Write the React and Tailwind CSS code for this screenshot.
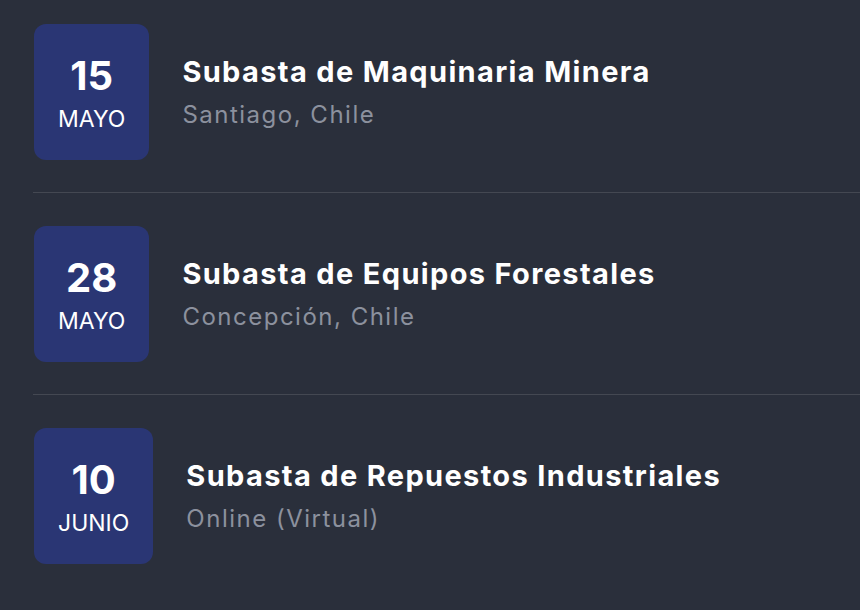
import React from "react";

const items = [
  { day: "15", month: "MAYO", title: "Subasta de Maquinaria Minera", place: "Santiago, Chile" },
  { day: "28", month: "MAYO", title: "Subasta de Equipos Forestales", place: "Concepción, Chile" },
  { day: "10", month: "JUNIO", title: "Subasta de Repuestos Industriales", place: "Online (Virtual)" },
];

export default function App() {
  return (
    <div
      className="w-[860px] h-[610px] overflow-hidden bg-[#2a2f3b] pl-[34px]"
      style={{ fontFamily: "Inter, 'Noto Sans', sans-serif" }}
    >
      {items.map((it, i) => (
        <div
          key={i}
          className={`flex items-center gap-[33px] pb-8 ${i === 0 ? "pt-6" : "pt-[33px]"} ${i < 2 ? "border-b border-[#444852] -ml-px" : ""}`}
        >
          <div className={`h-[136px] px-6 rounded-xl bg-[#2a3674] flex flex-col items-center pt-[32px] text-white ${i < 2 ? "ml-px" : ""}`}>
            <div className="text-[40px] leading-none font-bold">{it.day}</div>
            <div className="text-[23px] leading-none mt-[12px]">{it.month}</div>
          </div>
          <div className="flex flex-col">
            <div className="text-[29px] font-bold text-white leading-[36px] tracking-[1.35px]">{it.title}</div>
            <div className="text-[24px] text-[#8c919e] leading-[32px] mt-[9px] tracking-[1.5px]">{it.place}</div>
          </div>
        </div>
      ))}
    </div>
  );
}
